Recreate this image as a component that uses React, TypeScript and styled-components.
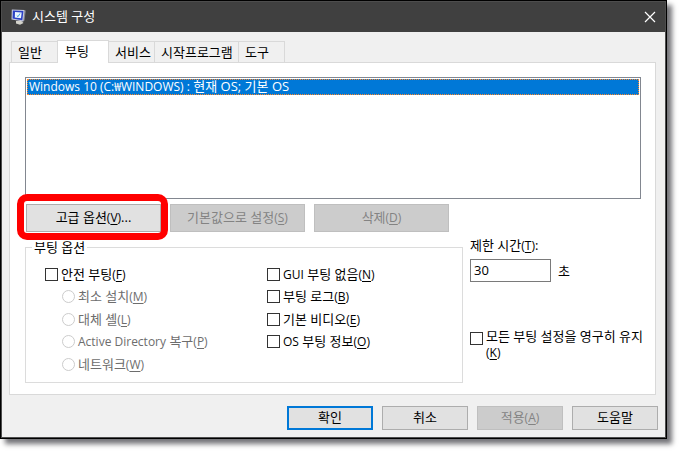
import React from "react";
import styled, { createGlobalStyle, css } from "styled-components";

const GlobalStyle = createGlobalStyle`
  *, *::before, *::after { box-sizing: border-box; }
  body { margin: 0; background: #fff; }
  body, button, input {
    font-family: "Open Sans", "Noto Sans CJK KR", sans-serif;
    font-size: 13px;
    line-height: 16px;
    color: #000;
  }
  u { text-underline-offset: 2px; text-decoration-thickness: 1px; text-decoration-skip-ink: none; }
`;

const DialogWindow = styled.main`
  margin: 0 12px 27px 0;
  border: 1px solid #000;
  background: #f0f0f0;
  box-shadow: 5px 5px 5px rgba(0, 0, 10, 0.55);
`;

const Frame = styled.div`
  border: 1px solid #4d4d4d;
`;

const TitleBar = styled.header`
  display: flex;
  align-items: center;
  height: 30px;
  padding: 0 9px;
  gap: 5px;
  background: #404040;
`;

const Title = styled.h1`
  flex: 1;
  margin: 0;
  padding-bottom: 2px;
  font-size: 13px;
  font-weight: 400;
  color: #fff;
`;

const CloseButton = styled.button`
  display: flex;
  padding: 0;
  border: 0;
  background: none;
`;

const Content = styled.div`
  padding: 8px 9px 7px 7px;
`;

const TabList = styled.div`
  display: flex;
  align-items: flex-end;
  height: 23px;
  margin-bottom: -1px;
  padding-left: 2px;
`;

const Tab = styled.button<{ $width: number; $active?: boolean }>`
  width: ${(p) => p.$width}px;
  height: 21px;
  margin-bottom: 1px;
  padding: 0 0 1px 6px;
  border: 1px solid #d9d9d9;
  border-left-width: 0;
  border-bottom: 0;
  background: #f0f0f0;
  text-align: left;
  white-space: nowrap;
  &:first-child { border-left-width: 1px; }
  ${(p) =>
    p.$active &&
    css`
      z-index: 1;
      height: 23px;
      margin: 0 0 0 -1px;
      padding: 0 0 3px 7px;
      border-left-width: 1px;
      background: #fff;
    `}
`;

const TabPanel = styled.section`
  padding: 14px 4px 11px 15px;
  border: 1px solid #d9d9d9;
  background: #fff;
`;

const BootList = styled.ul`
  height: 122px;
  margin: 0 10px 0 0;
  padding: 1px;
  border: 1px solid #828790;
  background: #fff;
  list-style: none;
`;

const BootEntry = styled.li`
  height: 16px;
  padding: 0 1px;
  border: 1px dotted #ff8728;
  background: #0078d7;
  color: #fff;
  line-height: 12px;
  white-space: nowrap;
`;

const ActionRow = styled.div`
  display: flex;
  gap: 9px;
  margin: 5px 0 5px 1px;
`;

const Highlight = styled.div`
  position: relative;
  &::after {
    content: "";
    position: absolute;
    inset: -10px -7px -8px -9px;
    border: 7px solid #f00;
    border-radius: 10px;
    pointer-events: none;
  }
`;

const PushButton = styled.button<{ $wide?: boolean; $primary?: boolean }>`
  width: ${(p) => (p.$wide ? 135 : 86)}px;
  height: ${(p) => (p.$wide ? 28 : 24)}px;
  padding: 0 0 2px;
  border: ${(p) => (p.$primary ? "2px solid #0078d7" : "1px solid #adadad")};
  background: #e1e1e1;
  white-space: nowrap;
  &:disabled {
    border-color: #bfbfbf;
    background: #ccc;
    color: #838383;
  }
`;

const Settings = styled.div`
  display: grid;
  grid-template-columns: minmax(0, 1fr) 181px;
  gap: 7px;
`;

const BootOptions = styled.fieldset`
  min-width: 0;
  margin: 2px 0 0;
  padding: 8px 0 7px 6px;
  border: 1px solid #dcdcdc;
`;

const Legend = styled.legend`
  padding: 0 2px;
`;

const OptionGrid = styled.div`
  display: grid;
  grid-template-columns: 222px 1fr;
  grid-template-rows: 22px 23px 22px 23px 22px;
  grid-auto-flow: column;
  align-items: center;
  padding-left: 13px;
`;

const Choice = styled.label<{ $indent?: boolean; $dim?: boolean }>`
  display: flex;
  align-items: center;
  gap: 3px;
  padding-left: ${(p) => (p.$indent ? 17 : 0)}px;
  color: ${(p) => (p.$dim ? "#6d6d6d" : "#000")};
`;

const CheckBox = styled.input.attrs({ type: "checkbox" })`
  appearance: none;
  flex: none;
  width: 13px;
  height: 13px;
  margin: 0;
  border: 1px solid #333;
  background: #fff;
  &:checked { background: #0078d7; }
`;

const WrappingChoice = styled(Choice)`
  align-items: flex-start;
  ${CheckBox} { margin-top: 4px; }
`;

const Radio = styled.input.attrs({ type: "radio" })`
  appearance: none;
  flex: none;
  width: 13px;
  height: 13px;
  margin: 0;
  border: 1px solid #ccc;
  border-radius: 50%;
  background: #fff;
`;

const SideColumn = styled.div`
  display: flex;
  flex-direction: column;
`;

const TimeoutRow = styled.div`
  display: flex;
  align-items: center;
  gap: 7px;
  margin: 5px 0 46px;
`;

const TimeoutInput = styled.input`
  width: 81px;
  height: 23px;
  padding: 0 3px 2px;
  border: 1px solid #7a7a7a;
  background: #fff;
`;

const Footer = styled.footer`
  display: flex;
  justify-content: flex-end;
  gap: 9px;
  margin: 11px -2px 0 0;
`;

const Latin = styled.span`
  font-size: 12px;
`;

const MonitorIcon = () => (
  <svg width="16" height="16" viewBox="0 0 16 16" aria-hidden="true">
    <path d="M5 12 10.500 12 12.500 14 9 15.800 5 14.500Z" fill="#d4d3cb" />
    <path d="M12.500 1.500 14.800 1.500 13.500 11.500 11 13Z" fill="#85878a" />
    <path d="M.8.5 13.500 1 12.300 12.500 .5 10.500Z" fill="#c4c7dc" />
    <path d="M1.900 1.600 12.400 2.100 11.300 11.200 1.600 9.600Z" fill="#2a40c4" />
    <path d="M4 3 10.700 3.500 10 9.200 3.800 8.400Z" fill="#edf7ff" />
    <path d="m5.800 6.500 1.200 1.200 2-3.200" fill="none" stroke="#3d9fe0" />
  </svg>
);

const CloseIcon = () => (
  <svg width="12" height="12" viewBox="0 0 12 12" aria-hidden="true">
    <path d="M1 1 11 11M11 1 1 11" stroke="#fff" strokeWidth="1.200" />
  </svg>
);

const tabs = [
  { label: "일반", width: 47 },
  { label: "부팅", width: 52, active: true },
  { label: "서비스", width: 46 },
  { label: "시작프로그램", width: 84 },
  { label: "도구", width: 46 },
];

const radios = [
  { label: "최소 설치", k: "M" },
  { label: "대체 셸", k: "L" },
  { latin: "Active Directory", label: " 복구", k: "P" },
  { label: "네트워크", k: "W" },
];

const checks = [
  { latin: "GUI", label: " 부팅 없음", k: "N" },
  { label: "부팅 로그", k: "B" },
  { label: "기본 비디오", k: "E" },
  { latin: "OS", label: " 부팅 정보", k: "O" },
];

const Key = ({ k }: { k: string }) => (
  <Latin>
    (<u>{k}</u>)
  </Latin>
);

const Caption = ({ latin, label, k }: { latin?: string; label: string; k: string }) => (
  <span>
    {latin && <Latin>{latin}</Latin>}
    {label}
    <Key k={k} />
  </span>
);

export default function App() {
  return (
    <>
      <GlobalStyle />
      <DialogWindow>
        <Frame>
          <TitleBar>
            <MonitorIcon />
            <Title>시스템 구성</Title>
            <CloseButton aria-label="닫기">
              <CloseIcon />
            </CloseButton>
          </TitleBar>
          <Content>
            <TabList role="tablist">
              {tabs.map((t) => (
                <Tab key={t.label} role="tab" aria-selected={!!t.active} $width={t.width} $active={t.active}>
                  {t.label}
                </Tab>
              ))}
            </TabList>
            <TabPanel role="tabpanel">
              <BootList role="listbox" aria-label="부팅 항목">
                <BootEntry role="option" aria-selected="true">
                  <Latin>Windows 10 (C:₩WINDOWS) :</Latin> 현재 OS; 기본 OS
                </BootEntry>
              </BootList>
              <ActionRow>
                <Highlight>
                  <PushButton $wide>
                    고급 옵션<Key k="V" />...
                  </PushButton>
                </Highlight>
                <PushButton $wide disabled>
                  기본값으로 설정<Key k="S" />
                </PushButton>
                <PushButton $wide disabled>
                  삭제<Key k="D" />
                </PushButton>
              </ActionRow>
              <Settings>
                <BootOptions>
                  <Legend>부팅 옵션</Legend>
                  <OptionGrid>
                    <Choice>
                      <CheckBox />
                      <Caption label="안전 부팅" k="F" />
                    </Choice>
                    {radios.map((r) => (
                      <Choice key={r.k} $indent $dim>
                        <Radio name="safeboot" disabled />
                        <Caption {...r} />
                      </Choice>
                    ))}
                    {checks.map((c) => (
                      <Choice key={c.k}>
                        <CheckBox />
                        <Caption {...c} />
                      </Choice>
                    ))}
                  </OptionGrid>
                </BootOptions>
                <SideColumn>
                  <label htmlFor="timeout">
                    제한 시간<Key k="T" />:
                  </label>
                  <TimeoutRow>
                    <TimeoutInput id="timeout" defaultValue="30" />
                    <span>초</span>
                  </TimeoutRow>
                  <WrappingChoice>
                    <CheckBox />
                    <Caption label="모든 부팅 설정을 영구히 유지" k="K" />
                  </WrappingChoice>
                </SideColumn>
              </Settings>
            </TabPanel>
            <Footer>
              <PushButton $primary>확인</PushButton>
              <PushButton>취소</PushButton>
              <PushButton disabled>
                적용<Key k="A" />
              </PushButton>
              <PushButton>도움말</PushButton>
            </Footer>
          </Content>
        </Frame>
      </DialogWindow>
    </>
  );
}
